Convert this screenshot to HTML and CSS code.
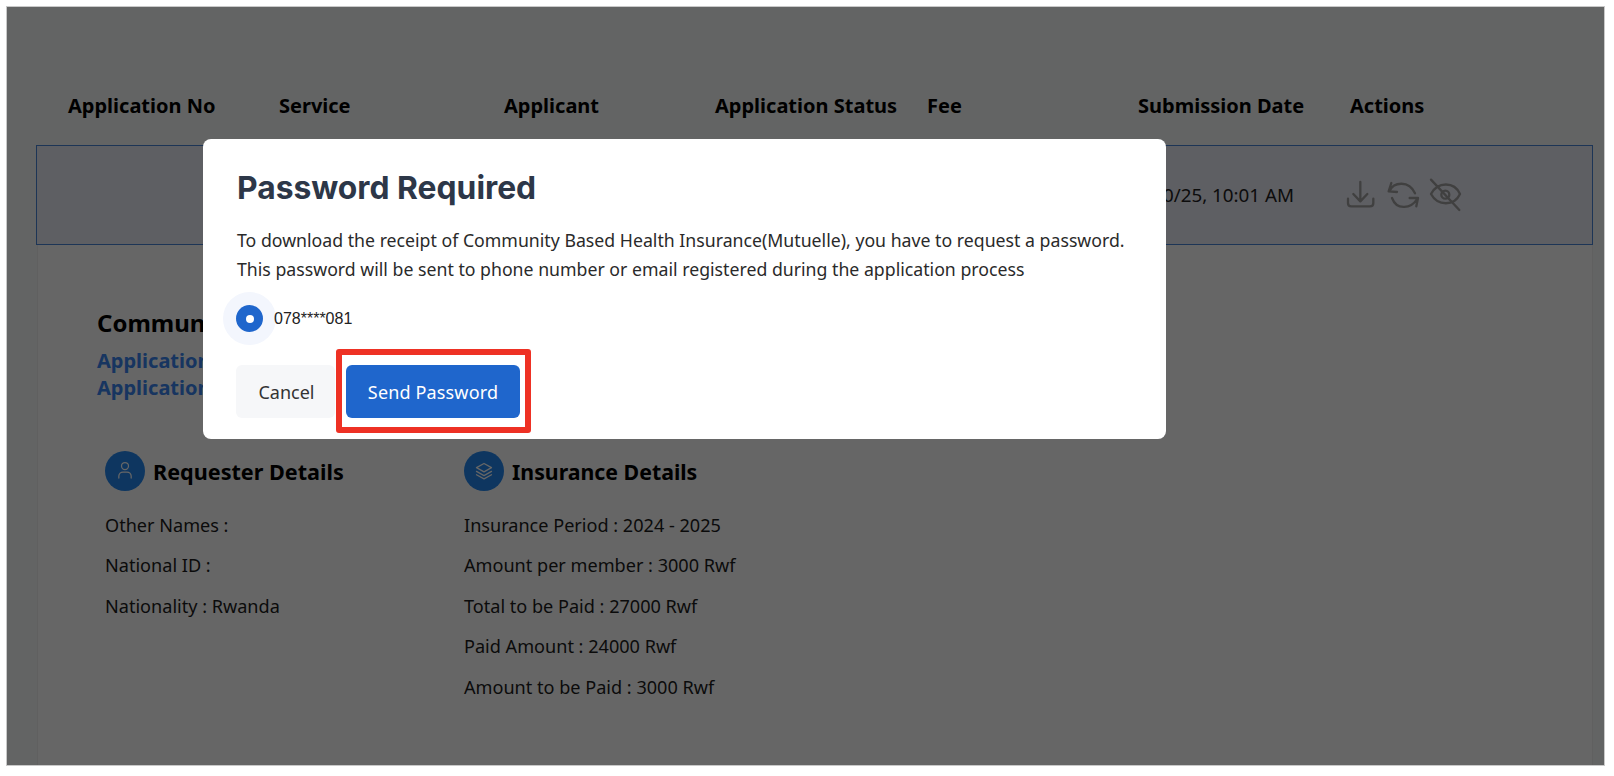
FILE: index.html
```html
<!DOCTYPE html>
<html lang="en">
<head>
<meta charset="utf-8">
<title>Password Required</title>
<link rel="stylesheet" href="styles.css">
</head>
<body>
<div class="frame">
  <div class="page">
    <div class="thead">
      <div>Application No</div><div>Service</div><div>Applicant</div><div>Application Status</div><div>Fee</div><div>Submission Date</div><div>Actions</div>
    </div>
    <div class="row">
      <div class="date">01/10/25, 10:01 AM</div>
      <div class="actions">
        <svg class="ic ic-dl" viewBox="18 20 86 104"><path d="M24 82V95Q24 105 34 105H90Q100 105 100 95V82M61 32V88M40 68 61 90 82 68"/></svg>
        <svg class="ic" viewBox="136 20 104 104"><path d="M155 35 147 60 172 62M150 58C162 32 208 26 226 66M157 80C172 120 215 110 232 84M210 80H235L230 105"/></svg>
        <svg class="ic ic-eye" viewBox="266 20 104 104"><path d="M275 68C295 30 345 30 362 68 345 105 295 105 275 68Z"/><circle cx="318" cy="70" r="12"/><path d="M275 25 360 116"/></svg>
      </div>
    </div>
    <div class="card">
      <h2 class="card-title">Community</h2>
      <div class="link">Application</div>
      <div class="link">Application</div>
      <div class="cols">
        <section class="col">
          <div class="sec-head">
            <span class="badge"><svg viewBox="0 0 24 24"><circle cx="12" cy="6" r="4.200"/><path d="M4.600 20.400V18A5 5 0 0 1 9.600 13.200H14.400A5 5 0 0 1 19.400 18V20.400"/></svg></span>
            <h3>Requester Details</h3>
          </div>
          <p>Other Names :</p>
          <p>National ID :</p>
          <p>Nationality : Rwanda</p>
        </section>
        <section class="col">
          <div class="sec-head">
            <span class="badge"><svg viewBox="0 0 24 24"><path d="M12 3 3 8l9 5 9-5-9-5Z"/><path d="m3 12.500 9 5 9-5"/><path d="m3 16.500 9 5 9-5"/></svg></span>
            <h3 class="h-ins">Insurance Details</h3>
          </div>
          <p>Insurance Period : 2024 - 2025</p>
          <p>Amount per member : 3000 Rwf</p>
          <p>Total to be Paid : 27000 Rwf</p>
          <p>Paid Amount : 24000 Rwf</p>
          <p>Amount to be Paid : 3000 Rwf</p>
        </section>
      </div>
    </div>
  </div>
  <div class="overlay"></div>
  <div class="modal">
    <h1>Password Required</h1>
    <p class="msg">To download the receipt of Community Based Health Insurance(Mutuelle), you have to request a password.<br>This password will be sent to phone number or email registered during the application process</p>
    <label class="choice">
      <span class="halo"><span class="radio"></span></span>
      <span class="phone">078****081</span>
    </label>
    <div class="btns">
      <button class="btn cancel">Cancel</button>
      <span class="send-wrap">
        <button class="btn send">Send Password</button>
        <span class="mark"></span>
      </span>
    </div>
  </div>
</div>
</body>
</html>
```
FILE: styles.css
```css
* { box-sizing: border-box; }
html, body { margin: 0; height: 100%; background: #fff; overflow: hidden; }
body { padding: 7px 10px 11px 7px; font-family: "Noto Sans", sans-serif; color: #111; }
.frame { position: relative; height: 758px; overflow: hidden; box-shadow: 0 0 0 1px #c9c9c9; }
.page { height: 100%; background: #f8fbfa; padding-left: 29px; padding-right: 11px; }
.overlay { position: absolute; inset: 0; background: rgba(0,0,0,.6); }

.thead { display: grid; grid-template-columns: 211px 225px 211px 212px 211px 212px 211px; height: 138px; padding: 0 0 26px 32px; font-size: 20px; font-weight: 700; color: #000; align-items: end; line-height: 26px; }
.thead div { white-space: nowrap; }

.row { height: 100px; border: 1px solid #4a85d8; background: #ecedf7; display: flex; align-items: center; justify-content: flex-end; padding-right: 129px; gap: 52px; font-size: 18.800px; }
.date { color: #222; white-space: nowrap; }
.actions { display: flex; gap: 10.500px; align-items: center; }
.ic { width: 34.670px; height: 34.670px; fill: none; stroke: #a0a0a0; stroke-width: 7; stroke-linecap: round; stroke-linejoin: round; }
.ic-dl { width: 28.670px; }
.ic-eye { margin-left: -2px; }

.card { height: 520px; margin-left: 1px; background: #fff; border-left: 1px solid #f0f0f0; border-right: 1px solid #f0f0f0; padding: 63px 0 0 59px; }
.card-title { margin: 0 0 9px; font-size: 24px; line-height: 30px; font-weight: 700; color: #000; }
.link { font-size: 20px; font-weight: 700; color: #3a85f0; line-height: 27px; }
.cols { display: grid; grid-template-columns: 359px 400px; margin: 50px 0 0 8px; }
.sec-head { display: flex; align-items: center; gap: 8px; height: 40px; margin-bottom: 14px; }
.sec-head h3 { margin: 0; font-size: 21.600px; font-weight: 700; color: #000; }
.sec-head .h-ins { font-size: 21.300px; }
.badge { width: 40px; height: 40px; border-radius: 50%; background: #2488f0; display: flex; align-items: center; justify-content: center; }
.badge svg { width: 20px; height: 20px; fill: none; stroke: #fff; stroke-width: 1.5; stroke-linecap: round; stroke-linejoin: round; }
.col p { margin: 0; font-size: 18.100px; line-height: 40.400px; color: #1c1c1c; white-space: nowrap; }

.modal { position: absolute; left: 196px; top: 132px; width: 963px; height: 300px; background: #fff; border-radius: 8px; padding: 27px 34px 0; }
.modal h1 { margin: 0; font-family: Inter, sans-serif; font-size: 31.800px; line-height: 44px; font-weight: 700; color: #2d3748; }
.msg { margin: 16px 0 0; font-size: 17.720px; line-height: 28.500px; color: #2a2a2a; white-space: nowrap; }
.choice { display: flex; align-items: center; height: 53px; margin: 9px 0 0 -14px; }
.halo { width: 53px; height: 53px; border-radius: 50%; background: #f3f6fd; display: flex; align-items: center; justify-content: center; }
.radio { width: 27px; height: 27px; border-radius: 50%; background: #1f66cc; display: flex; align-items: center; justify-content: center; }
.radio::after { content: ""; width: 8px; height: 8px; border-radius: 50%; background: #fff; }
.phone { font-family: "Liberation Sans", sans-serif; font-size: 16px; color: #222; margin-left: -2px; }
.btns { display: flex; gap: 11px; margin: 20px 0 0 -1px; }
.btn { height: 53px; border: 0; border-radius: 6px; font-family: "Noto Sans", sans-serif; font-size: 18px; padding: 0; }
.cancel { width: 99px; background: #f6f7f9; color: #333; padding-left: 2px; }
.send-wrap { position: relative; display: block; }
.send { width: 174px; background: #1f66cc; color: #fff; font-weight: 400; letter-spacing: .15px; display: block; }
.mark { position: absolute; left: -10px; top: -16px; width: 195px; height: 84px; border: 6px solid #ee3124; border-radius: 3px; }
```
